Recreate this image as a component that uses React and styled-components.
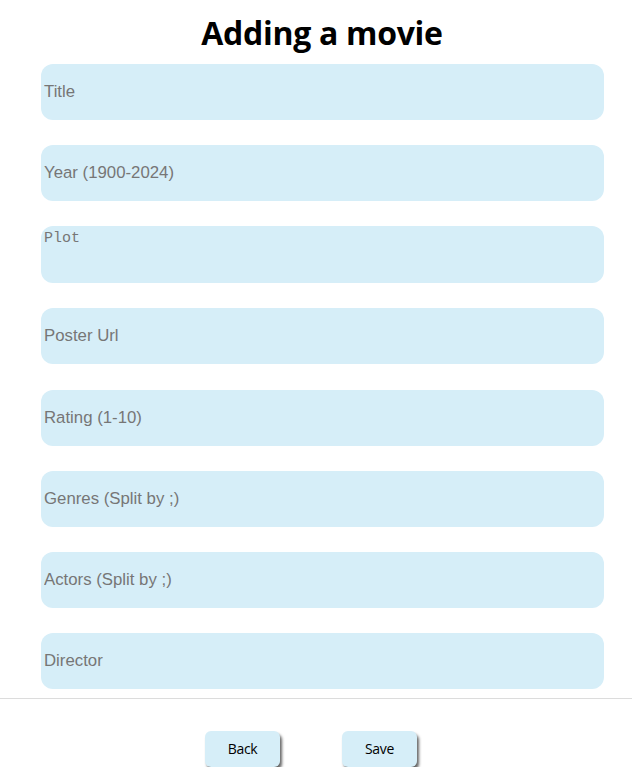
import React from "react";
import styled, { createGlobalStyle } from "styled-components";

const Global = createGlobalStyle`
  html, body { margin: 0; padding: 0; background: #fff; }
  body { font-family: "Liberation Sans", Arial, sans-serif; }
`;

const Page = styled.div`
  display: flex;
  flex-direction: column;
`;

const Heading = styled.h1`
  margin: 0;
  height: 64px;
  display: flex;
  align-items: center;
  justify-content: center;
  font-family: "Open Sans", Lato, sans-serif;
  font-weight: 700;
  font-size: 32px;
  letter-spacing: -0.3px;
  color: #000;
  padding-left: 12px;
  box-sizing: border-box;
`;

const Form = styled.form`
  display: flex;
  flex-direction: column;
  gap: 25.15px;
  margin: 0 28px 0 41px;
`;

const Field = styled.input`
  height: 56px;
  box-sizing: border-box;
  border: none;
  border-radius: 12px;
  background: #d6eef8;
  padding: 0 3px;
  font-family: "Liberation Sans", Arial, sans-serif;
  font-size: 16.8px;
  color: #333;
  outline: none;
  &::placeholder { color: #767676; }
`;

const Area = styled.textarea`
  height: 57px;
  box-sizing: border-box;
  border: none;
  border-radius: 12px;
  background: #d6eef8;
  padding: 4px 3px 3px;
  font-family: "Liberation Mono", monospace;
  font-size: 15px;
  resize: none;
  outline: none;
  &::placeholder { color: #767676; }
`;

const Divider = styled.hr`
  margin: 9px 0 0;
  border: none;
  border-top: 1px solid #dcdcdc;
`;

const Actions = styled.div`
  display: flex;
  justify-content: center;
  gap: 62px;
  padding-top: 32px;
  padding-right: 10px;
`;

const Button = styled.button`
  width: 75px;
  height: 36px;
  border: none;
  border-radius: 6px;
  background: #d6eef8;
  box-shadow: 2px 3px 3px rgba(0, 0, 0, 0.6);
  font-family: "Open Sans", Lato, sans-serif;
  font-size: 14px;
  letter-spacing: -0.3px;
  color: #000;
  cursor: pointer;
`;

export default function App() {
  return (
    <Page>
      <Global />
      <Heading>Adding a movie</Heading>
      <Form>
        <Field placeholder="Title" />
        <Field placeholder="Year (1900-2024)" />
        <Area placeholder="Plot" />
        <Field placeholder="Poster Url" />
        <Field placeholder="Rating (1-10)" />
        <Field placeholder="Genres (Split by ;)" />
        <Field placeholder="Actors (Split by ;)" />
        <Field placeholder="Director" />
      </Form>
      <Divider />
      <Actions>
        <Button type="button">Back</Button>
        <Button type="button">Save</Button>
      </Actions>
    </Page>
  );
}
